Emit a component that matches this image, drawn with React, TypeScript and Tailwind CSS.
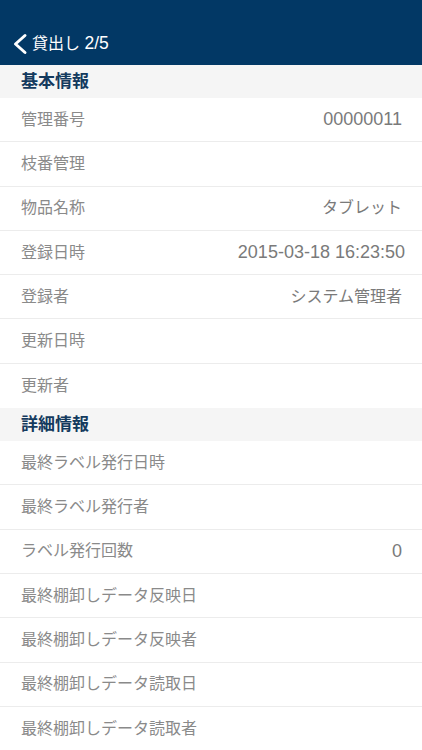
interface Row {
  label: string;
  value?: string;
  numeric?: boolean;
  wide?: boolean;
}

const basicRows: Row[] = [
  { label: '管理番号', value: '00000011', numeric: true },
  { label: '枝番管理' },
  { label: '物品名称', value: 'タブレット' },
  { label: '登録日時', value: '2015-03-18 16:23:50', numeric: true, wide: true },
  { label: '登録者', value: 'システム管理者' },
  { label: '更新日時' },
  { label: '更新者' },
];

const detailRows: Row[] = [
  { label: '最終ラベル発行日時' },
  { label: '最終ラベル発行者' },
  { label: 'ラベル発行回数', value: '0', numeric: true },
  { label: '最終棚卸しデータ反映日' },
  { label: '最終棚卸しデータ反映者' },
  { label: '最終棚卸しデータ読取日' },
  { label: '最終棚卸しデータ読取者' },
];

function SectionHeader({ title }: { title: string }) {
  return (
    <div className="h-[33px] bg-[#f5f5f5] flex items-center pl-[21px] text-[17px] font-bold text-[#143a5e]">
      {title}
    </div>
  );
}

function InfoRow({ label, value, numeric, wide }: Row) {
  return (
    <div className="h-[44.3px] flex items-center justify-between pl-[21px] pr-[20px] border-b border-[#ececec] last:border-b-0 text-[16px]">
      <span className="text-[#8a8a8a]">{label}</span>
      {value && (
        <span
          className={
            numeric
              ? wide
                ? 'text-[#7a7a7a] whitespace-nowrap text-[18px] -mr-[3px]'
                : 'text-[#7a7a7a] whitespace-nowrap text-[18px]'
              : 'text-[#7a7a7a] whitespace-nowrap'
          }
        >
          {value}
        </span>
      )}
    </div>
  );
}

export default function App() {
  return (
    <div
      className="w-[422px] h-[750px] overflow-hidden bg-white"
      style={{ fontFamily: '"Liberation Sans", "Noto Sans CJK JP", sans-serif' }}
    >
      {/* ヘッダー */}
      <div className="h-[65px] bg-[#023865] flex items-center pt-[23px] pl-[12px] text-white">
        <svg width="16" height="22" viewBox="0 0 16 22" className="mr-[4px]">
          <polyline
            points="13,2.5 3.5,11 13,19.5"
            fill="none"
            stroke="white"
            strokeWidth="3"
            strokeLinecap="round"
            strokeLinejoin="round"
          />
        </svg>
        <span className="text-[16px] leading-none">
          貸出し <span className="text-[17.5px]">2/5</span>
        </span>
      </div>

      <SectionHeader title="基本情報" />
      <div>
        {basicRows.map((r) => (
          <InfoRow key={r.label} {...r} />
        ))}
      </div>

      <SectionHeader title="詳細情報" />
      <div>
        {detailRows.map((r) => (
          <InfoRow key={r.label} {...r} />
        ))}
      </div>
    </div>
  );
}
